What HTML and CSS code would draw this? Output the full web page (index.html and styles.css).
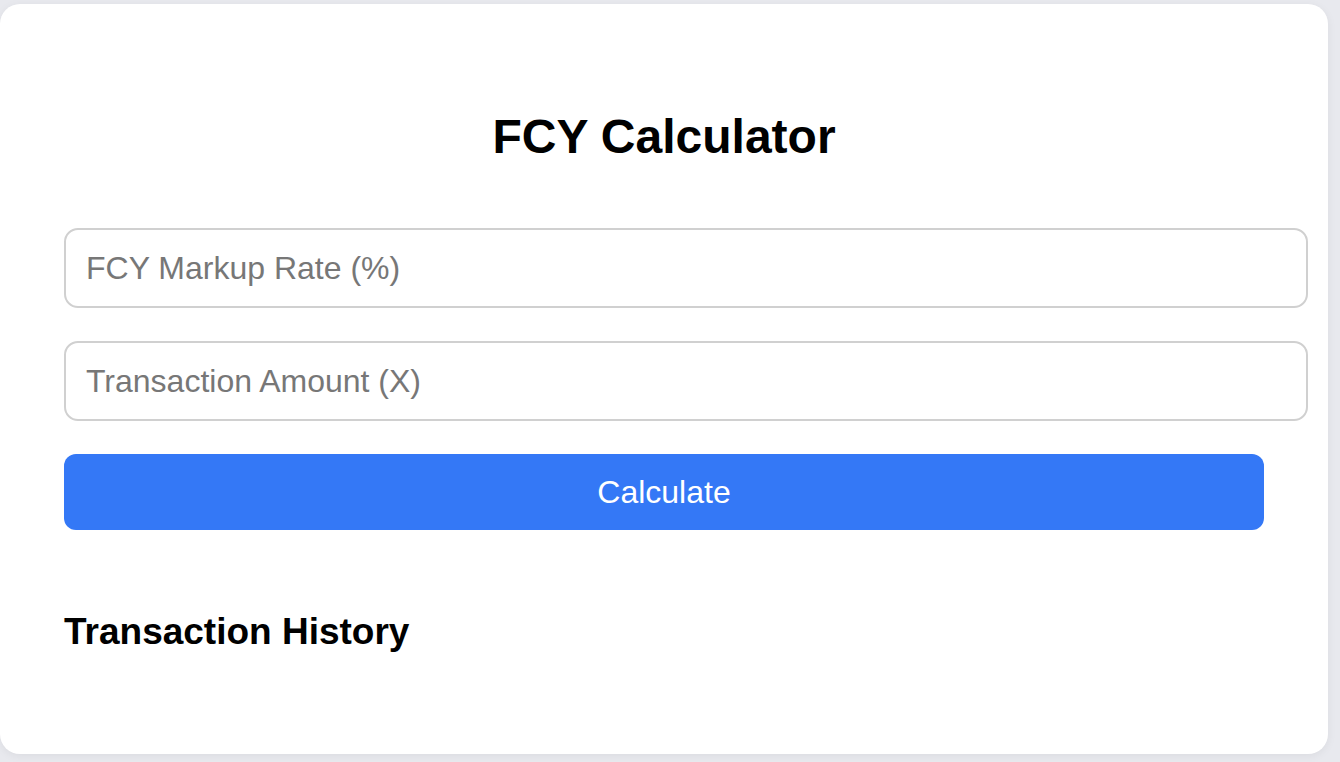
FILE: index.html
```html
<!DOCTYPE html>
<html lang="en">
<head>
<meta charset="utf-8">
<title>FCY Calculator</title>
<link rel="stylesheet" href="styles.css">
</head>
<body>
<main class="card">
  <h1 class="title">FCY Calculator</h1>
  <form class="form" onsubmit="return false;">
    <input class="field" type="number" placeholder="FCY Markup Rate (%)">
    <input class="field" type="number" placeholder="Transaction Amount (X)">
    <button class="btn" type="button">Calculate</button>
  </form>
  <h2 class="history">Transaction History</h2>
</main>
</body>
</html>
```
FILE: styles.css
```css
html, body {
  margin: 0;
  padding: 0;
}
body {
  background: #e8e9ee;
  font-family: "Liberation Sans", Arial, Helvetica, sans-serif;
  height: 762px;
  overflow: hidden;
}
.card {
  box-sizing: border-box;
  width: 1328px;
  height: 750px;
  margin-top: 4px;
  background: #ffffff;
  border-radius: 20px;
  box-shadow: 0 2px 10px rgba(0, 0, 0, 0.06);
  padding: 105px 64px 0 64px;
}
.title {
  margin: 0;
  font-size: 48px;
  line-height: 56px;
  font-weight: 700;
  text-align: center;
  color: #000;
}
.form {
  display: flex;
  flex-direction: column;
  align-items: flex-start;
  gap: 33px;
  margin-top: 63px;
}
.field {
  box-sizing: content-box;
  width: 100%;
  height: 76px;
  padding: 0 20px;
  border: 2px solid #d0d0d0;
  border-radius: 14px;
  font-family: inherit;
  font-size: 32px;
  color: #333;
  background: #fff;
  outline: none;
}
.field::placeholder {
  color: #777777;
}
.btn {
  width: 100%;
  height: 76px;
  border: none;
  border-radius: 12px;
  background: #3478f6;
  color: #fff;
  font-family: inherit;
  font-size: 32px;
  cursor: pointer;
}
.history {
  margin: 81px 0 0 0;
  font-size: 37px;
  line-height: 42px;
  font-weight: 700;
  color: #000;
}
```
